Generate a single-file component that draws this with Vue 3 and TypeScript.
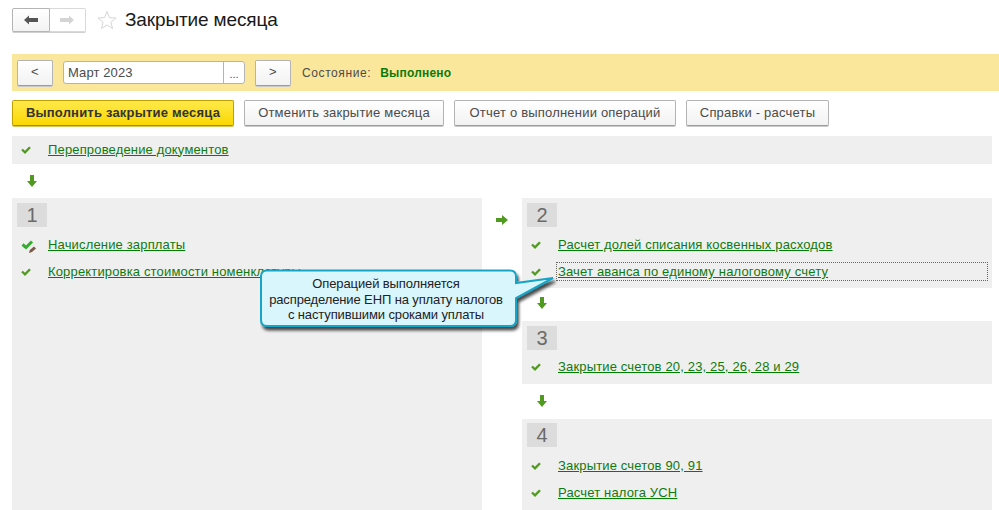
<script setup lang="ts">
interface Op { label: string; icon?: 'check' | 'edit'; focused?: boolean }
const left: Op[] = [
  { label: 'Начисление зарплаты', icon: 'edit' },
  { label: 'Корректировка стоимости номенклатуры' },
]
const stages: { num: number; ops: Op[]; cls: string }[] = [
  { num: 2, cls: 's2', ops: [
    { label: 'Расчет долей списания косвенных расходов' },
    { label: 'Зачет аванса по единому налоговому счету', focused: true },
  ] },
  { num: 3, cls: 's3', ops: [{ label: 'Закрытие счетов 20, 23, 25, 26, 28 и 29' }] },
  { num: 4, cls: 's4', ops: [
    { label: 'Закрытие счетов 90, 91' },
    { label: 'Расчет налога УСН' },
  ] },
]
const actions = ['Отменить закрытие месяца', 'Отчет о выполнении операций', 'Справки - расчеты']
</script>

<template>
  <div class="page">
    <header class="head">
      <div class="nav">
        <button class="nav-btn active">
          <svg width="14" height="10" viewBox="0 0 14 10"><path d="M0 5 5 .5V3h9v4H5v2.500z" fill="#555"/></svg>
        </button>
        <button class="nav-btn">
          <svg width="14" height="10" viewBox="0 0 14 10"><path d="M14 5 9 .5V3H0v4h9v2.500z" fill="#d4d4d4"/></svg>
        </button>
      </div>
      <svg class="star" width="20" height="20" viewBox="0 0 20 20"><path d="M10 1.500 12.400 7.600 19 8 13.900 12.200 15.600 18.600 10 15 4.400 18.600 6.100 12.200 1 8 7.600 7.600z" fill="#fff" stroke="#d6d6d6"/></svg>
      <h1>Закрытие месяца</h1>
    </header>

    <section class="band">
      <button class="btn small">&lt;</button>
      <div class="field"><span class="value">Март 2023</span><span class="dots">...</span></div>
      <button class="btn small">&gt;</button>
      <span class="state-label">Состояние:</span>
      <b class="state">Выполнено</b>
    </section>

    <section class="actions">
      <button class="btn primary">Выполнить закрытие месяца</button>
      <button v-for="a in actions" :key="a" class="btn">{{ a }}</button>
    </section>

    <div class="panel top">
      <div class="row">
        <span class="ico"><svg width="10" height="8" viewBox="0 0 10 8"><path d="M1 3.500 4 6.300 9 1.200" fill="none" stroke="#4f9a1f" stroke-width="2.300"/></svg></span>
        <a class="link">Перепроведение документов</a>
      </div>
    </div>

    <div class="arrow-down first">
      <svg width="10" height="12" viewBox="0 0 10 12"><path d="M3 0h4v6h3l-5 6-5-6h3z" fill="#4f9a1f"/></svg>
    </div>

    <main class="grid">
      <div class="panel col-left">
        <div class="num">1</div>
        <div v-for="op in left" :key="op.label" class="row">
          <span class="ico">
            <svg v-if="op.icon === 'edit'" class="edit" width="16" height="14" viewBox="0 0 16 14"><path d="M1.500 4.500 5 7.500 11 1.500" fill="none" stroke="#34ad2e" stroke-width="3"/><path d="M8 13 8.800 10 13 6.500 15 8.500 11 12z" fill="#7c5a48"/></svg>
            <svg v-else width="10" height="8" viewBox="0 0 10 8"><path d="M1 3.500 4 6.300 9 1.200" fill="none" stroke="#4f9a1f" stroke-width="2.300"/></svg>
          </span>
          <a class="link">{{ op.label }}</a>
        </div>
      </div>

      <div class="arrow-right">
        <svg width="12" height="10" viewBox="0 0 12 10"><path d="M0 3h6V0l6 5-6 5V7H0z" fill="#4f9a1f"/></svg>
      </div>

      <div class="col-right">
        <template v-for="(s, i) in stages" :key="s.num">
          <div class="panel stage" :class="s.cls">
            <div class="num">{{ s.num }}</div>
            <div v-for="op in s.ops" :key="op.label" class="row">
              <span class="ico"><svg width="10" height="8" viewBox="0 0 10 8"><path d="M1 3.500 4 6.300 9 1.200" fill="none" stroke="#4f9a1f" stroke-width="2.300"/></svg></span>
              <a class="link" :class="{ focused: op.focused }"><span>{{ op.label }}</span></a>
            </div>
          </div>
          <div v-if="i < stages.length - 1" class="arrow-down" :class="'after' + s.num">
            <svg width="10" height="12" viewBox="0 0 10 12"><path d="M3 0h4v6h3l-5 6-5-6h3z" fill="#4f9a1f"/></svg>
          </div>
        </template>
      </div>
    </main>

    <aside class="callout">
      <svg width="300" height="68" viewBox="0 0 300 68">
        <defs><filter id="sh" x="-10%" y="-20%" width="120%" height="150%"><feDropShadow dx="2" dy="3.500" stdDeviation="1.800" flood-color="#000" flood-opacity=".7"/></filter></defs>
        <path d="M7 1.500H250q6 0 6 6V14L293 9 256 29V51q0 6-6 6H7q-6 0-6-6V7.500q0-6 6-6z" fill="#d9f6fd" stroke="#14a5c6" stroke-width="2" filter="url(#sh)"/>
      </svg>
      <p>Операцией выполняется<br>распределение ЕНП на уплату налогов<br>с наступившими сроками уплаты</p>
    </aside>
  </div>
</template>

<style>
html, body { margin: 0; background: #fff; overflow: hidden; }
</style>

<style scoped>
.page {
  position: relative;
  width: 999px;
  height: 510px;
  overflow: hidden;
  box-sizing: border-box;
  padding-left: 12px;
  font-family: "Liberation Sans", Arial, sans-serif;
  font-size: 13px;
  color: #4b4b4b;
}
.head { display: flex; align-items: center; height: 40px; }
.nav { display: flex; width: 74px; height: 24px; box-shadow: 0 1px 0 #d0d0d0; border-radius: 2px; }
.nav-btn {
  flex: 1; padding: 0; border: 1px solid #d9d9d9; background: #fff;
  display: flex; align-items: center; justify-content: center;
}
.nav-btn.active { border-color: #b5b5b5; border-radius: 2px 0 0 2px; background: linear-gradient(#fff, #f3f3f3); }
.nav-btn:last-child { border-left: 0; border-radius: 0 2px 2px 0; }
.star { margin-left: 11px; }
h1 { margin: 0 0 0 8px; font-size: 19px; letter-spacing: -.13px; font-weight: 400; color: #1a1a1a; }
.band {
  display: flex; align-items: center; height: 37px; margin-top: 14px;
  padding-left: 5px; background: #fbe79c;
}
.btn {
  box-sizing: border-box; height: 26px; padding: 0 0 2px; border: 1px solid #b4b4b4; border-bottom-color: #9c9c9c;
  border-radius: 2px; background: linear-gradient(#fff, #f2f2f2); font: inherit; color: #4b4b4b;
  letter-spacing: .2px; box-shadow: 0 1px 0 #c9c9c9;
}
.small { width: 36px; }
.field {
  display: flex; align-items: center; box-sizing: border-box; width: 182px; height: 23px;
  margin: 0 10px; background: #fff; border: 1px solid #b4b4b4; border-radius: 3px;
}
.value { flex: 1; padding-left: 4px; font-size: 13px; letter-spacing: .1px; }
.dots { width: 20px; height: 100%; border-left: 1px solid #b4b4b4; text-align: center; line-height: 25px; font-size: 11px; }
.state-label { margin-left: 11px; font-size: 12px; letter-spacing: .6px; }
.state { margin-left: 9px; font-size: 12px; letter-spacing: .2px; color: #0c7a0c; }
.actions { display: flex; gap: 10px; margin-top: 9px; }
.actions .btn:nth-child(2) { width: 200px; }
.actions .btn:nth-child(3) { width: 222px; }
.actions .btn:nth-child(4) { width: 143px; }
.btn.primary {
  width: 222px; font-weight: 700; color: #333; border-color: #c2a000; border-bottom-color: #a98c00;
  background: linear-gradient(#ffe94a, #fbd800); box-shadow: 0 1px 0 #d9c55e;
}
.panel { background: #efefef; }
.top { width: 980px; height: 28px; margin-top: 10px; }
.row { display: flex; align-items: center; height: 27px; }
.top .row { height: 26px; }
.ico { display: flex; justify-content: center; align-items: center; width: 36px; flex: none; padding-right: 8px; padding-top: 1px; box-sizing: border-box; }
.ico .edit { margin-left: 5px; margin-top: 3px; }
.link { color: #0f7a10; text-decoration: underline; text-decoration-color: #008000; letter-spacing: .16px; }
.arrow-down { display: flex; box-sizing: border-box; height: 34px; align-items: center; padding-left: 15px; }
.arrow-down.first { padding-left: 15px; }
.grid { display: grid; grid-template-columns: 470px 40px 470px; align-items: start; }
.col-left { height: 330px; padding: 5px 0 0; }
.arrow-right { display: flex; justify-content: center; padding-top: 17px; }
.num {
  width: 30px; height: 24px; margin: 0 0 3px 5px; background: #dcdcdc; color: #6a6a6a;
  font-size: 20px; line-height: 24px; text-align: center;
}
.col-left .num, .s2 .num { margin-bottom: 4px; }
.stage { padding-top: 5px; }
.s3 .num { margin-bottom: 3px; }
.s4 .num { margin-bottom: 5px; }
.s2 { height: 85px; }
.s3 { height: 58px; }
.s4 { height: 90px; padding-top: 4px; }
.after2 { height: 33px; padding-bottom: 3px; }
.after3 { height: 35px; padding-bottom: 1px; }
.stage .link { display: block; flex: 1; margin-right: 5px; }
.focused { outline: 1px dotted #666; padding: 1px 0; margin-left: -1px; padding-left: 1px; }
.callout { position: absolute; left: 260px; top: 269px; width: 300px; height: 68px; }
.callout svg { position: absolute; left: 0; top: 0; }
.callout p {
  position: relative; margin: 0; width: 252px; padding-top: 7px; text-align: center;
  font-size: 13px; letter-spacing: -.12px; line-height: 15.500px; color: #222;
}
</style>
